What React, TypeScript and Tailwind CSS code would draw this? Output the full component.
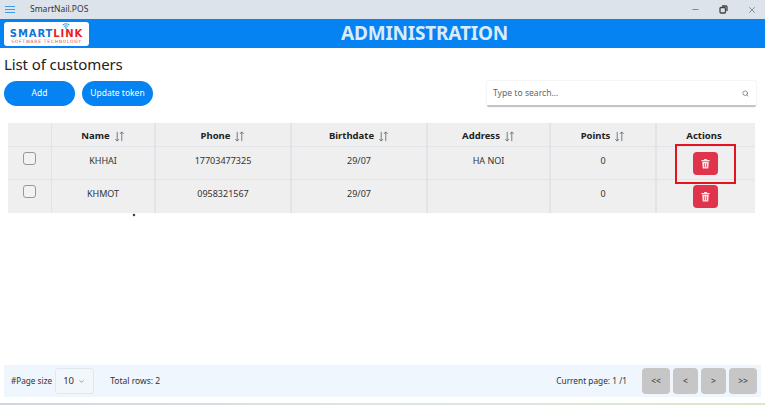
import React from "react";
import { Minus, X, Search, ChevronDown } from "lucide-react";

const font = "font-['Noto_Sans','Open_Sans',sans-serif]";

const customers = [
    { name: "KHHAI", phone: "17703477325", birthdate: "29/07", address: "HA NOI", points: 0 },
    { name: "KHMOT", phone: "0958321567", birthdate: "29/07", address: "", points: 0 },
];

const sortable = [
    { label: "Name", width: "w-[104px]" },
    { label: "Phone", width: "w-[136px]" },
    { label: "Birthdate", width: "w-[136px]" },
    { label: "Address", width: "w-[123px]" },
    { label: "Points", width: "w-[106px]" },
];

function SortIcon() {
    return (
        <svg width="11" height="11" viewBox="0 0 12 12" fill="none" stroke="#6b7280" strokeWidth="1" className="ml-[4px]">
            <path d="M3.500 1v10M1.500 8.800l2 2.200l2-2.200M8.500 11V1M8.500 1l2 2.200M8.500 1l-2 2.200" />
        </svg>
    );
}

function TrashIcon() {
    return (
        <svg width="9" height="10" viewBox="0 0 11 12" fill="#ffe6e6">
            <path d="M4 0h3l.5 1H10.500v1.500H.5V1H3.500z" />
            <path fillRule="evenodd" d="M1.500 3.300h8l-.6 8.200H2.100zM3.700 5l.2 5h.8l-.2-5zM6.500 5l-.2 5h.8l.2-5z" />
        </svg>
    );
}

function Logo() {
    return (
        <div className="relative flex h-[24px] w-[85px] flex-col items-center justify-end rounded-[3px] bg-white pb-[2px] font-['DejaVu_Sans',sans-serif] leading-none">
            <svg width="8" height="6" viewBox="0 0 8 6" fill="none" stroke="#2f9be8" strokeWidth="1" className="absolute left-[58px] top-[1px]">
                <path d="M.5 2C2.500.4 5.500.4 7.500 2M2 3.500c1.200-.9 2.800-.9 4 0" />
                <circle cx="4" cy="5" r=".5" />
            </svg>
            <div className="text-[10px] font-bold tracking-[0.9px] text-[#0a76dc]">
                SMART<span className="text-[#ee1c25]">LINK</span>
            </div>
            <div className="mt-[1px] text-[4.500px] tracking-[0.7px] text-[#e0505a]">SOFTWARE TECHNOLOGY</div>
        </div>
    );
}

export default function App() {
    return (
        <div className={`${font} relative flex h-[405px] w-[765px] flex-col overflow-hidden bg-white text-[#222]`}>
            {/* window title bar */}
            <div className="flex h-[19px] items-center bg-[#dce3ea] pl-[5px] pr-[8px]">
                <svg width="10" height="7" viewBox="0 0 10 7" stroke="#3f9bf0" strokeWidth="1">
                    <path d="M0 .5h10M0 3.500h10M0 6.500h10" />
                </svg>
                <span className="ml-[15px] text-[8.500px] text-[#333]">SmartNail.POS</span>
                <div className="ml-auto flex items-center gap-[19px] text-[#444]">
                    <Minus size={9} strokeWidth={1.500} />
                    <svg width="9" height="9" viewBox="0 0 9 9" fill="none" stroke="#444" strokeWidth="1.300">
                        <rect x="1" y="2.500" width="5.500" height="5.500" rx="1" />
                        <path d="M3 1h4a1 1 0 0 1 1 1v4" />
                    </svg>
                    <X size={10} strokeWidth={1.300} />
                </div>
            </div>

            {/* header */}
            <div className="relative flex h-[29px] items-center justify-center bg-[#0583f2] pl-[84px]">
                <div className="absolute left-[4px] top-[3px]">
                    <Logo />
                </div>
                <h1 className="text-[19px] font-bold tracking-[-0.2px] text-[#d9ecfd]">ADMINISTRATION</h1>
            </div>

            <div className="flex flex-1 flex-col px-[4px]">
                <h2 className="mt-[4px] text-[15px] leading-[24px] tracking-[-0.1px] text-[#222]">List of customers</h2>

                <div className="mt-[5px] flex items-start justify-between">
                    <div className="flex gap-[7px]">
                        <button className="h-[25px] w-[71px] rounded-full bg-[#0583f2] text-[8.500px] text-white">Add</button>
                        <button className="h-[25px] w-[71px] rounded-full bg-[#0583f2] text-[8.500px] text-white">Update token</button>
                    </div>
                    <div className="mr-[5px] flex h-[26px] w-[269px] items-center justify-between rounded-[2px] border-b-2 border-[#c4c4c4] bg-white pl-[6px] pr-[7px] shadow-[0_0_2px_rgba(0,0,0,0.15)]">
                        <span className="text-[8.600px] text-[#666]">Type to search...</span>
                        <Search size={7} strokeWidth={2} className="text-[#555]" />
                    </div>
                </div>

                <div className="mt-[16px] ml-[4px] w-[747px] bg-[#efefef] text-[9px]">
                    <div className="flex h-[24px] border-b border-[#e1e5ea]">
                        <div className="w-[44px] border-r border-[#e1e5ea]" />
                        {sortable.map((col) => (
                            <div key={col.label} className={`${col.width} flex items-center justify-center border-r-2 border-[#e1e5ea] pt-[3px] text-[9.500px] font-bold text-[#222]`}>
                                {col.label}
                                <SortIcon />
                            </div>
                        ))}
                        <div className="flex w-[98px] items-center justify-center pr-[4px] pt-[3px] text-[9.500px] font-bold text-[#222]">Actions</div>
                    </div>
                    {customers.map((c, i) => (
                        <div key={c.name} className={`flex h-[33px] text-[#333] ${i === 0 ? "border-b border-[#e1e5ea]" : ""}`}>
                            <div className="flex w-[44px] justify-center border-r border-[#e1e5ea] pt-[5px]">
                                <div className="h-[13px] w-[13px] rounded-[3px] border border-[#999] bg-[#f2f2f2]" />
                            </div>
                            <div className="w-[104px] border-r-2 border-[#e1e5ea] pt-[7px] text-center">{c.name}</div>
                            <div className="w-[136px] border-r-2 border-[#e1e5ea] pt-[7px] text-center">{c.phone}</div>
                            <div className="w-[136px] border-r-2 border-[#e1e5ea] pt-[7px] text-center">{c.birthdate}</div>
                            <div className="w-[123px] border-r-2 border-[#e1e5ea] pt-[7px] text-center">{c.address}</div>
                            <div className="w-[106px] border-r-2 border-[#e1e5ea] pt-[7px] text-center">{c.points}</div>
                            <div className="flex w-[98px] justify-center pr-[2px] pt-[5px]">
                                <button className="flex h-[23px] w-[25px] items-center justify-center rounded-[4px] bg-[#e0334c]">
                                    <TrashIcon />
                                </button>
                            </div>
                        </div>
                    ))}
                </div>

                {/* pager */}
                <div className="mt-auto mb-[6px] flex h-[32px] items-center bg-[#eff6fd] pl-[7px] pr-[4px] text-[8.500px] text-[#333]">
                    <span className="text-[8.200px]">#Page size</span>
                    <div className="ml-[3px] flex h-[26px] w-[39px] items-center justify-between rounded-[3px] border border-[#e1e7ee] bg-[#f2f7fc] pl-[7px] pr-[8px] text-[9.500px]">
                        10
                        <ChevronDown size={7} className="text-[#666]" />
                    </div>
                    <span className="ml-[16px]">Total rows: 2</span>
                    <span className="ml-auto mr-[15px] text-[8.300px]">Current page: 1 /1</span>
                    <div className="flex gap-[3px] text-[8.500px]">
                        <button className="h-[26px] w-[28px] rounded-[4px] bg-[#c6c6c6]">&lt;&lt;</button>
                        <button className="h-[26px] w-[25px] rounded-[4px] bg-[#c6c6c6]">&lt;</button>
                        <button className="h-[26px] w-[25px] rounded-[4px] bg-[#c6c6c6]">&gt;</button>
                        <button className="h-[26px] w-[28px] rounded-[4px] bg-[#c6c6c6]">&gt;&gt;</button>
                    </div>
                </div>
            </div>

            {/* desktop edge under the window */}
            <div className="h-[2px] bg-gradient-to-r from-[#cfd6e2] via-[#dbe6e4] to-[#d9e8cc]" />

            {/* red annotation box drawn over the screenshot */}
            <div className="absolute left-[675px] top-[144px] h-[40px] w-[61px] border-2 border-[#e5121f]" />
            {/* stray cursor speck */}
            <div className="absolute left-[133px] top-[214px] h-[2px] w-[2px] rotate-45 bg-[#222]" />
        </div>
    );
}
